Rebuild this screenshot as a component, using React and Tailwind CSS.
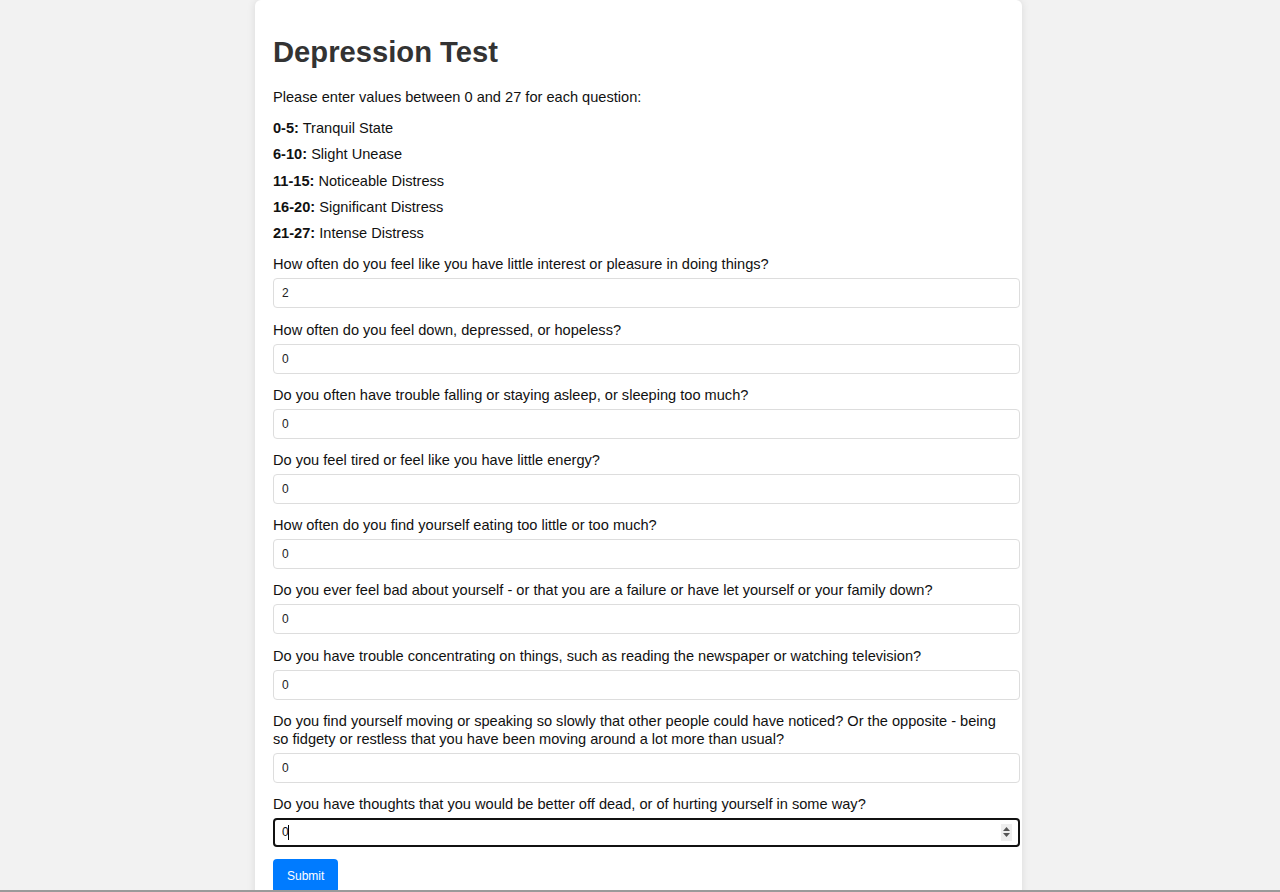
import React from 'react';

const legend = [
  ['0-5:', 'Tranquil State'],
  ['6-10:', 'Slight Unease'],
  ['11-15:', 'Noticeable Distress'],
  ['16-20:', 'Significant Distress'],
  ['21-27:', 'Intense Distress'],
];

const questions = [
  ['How often do you feel like you have little interest or pleasure in doing things?', '2'],
  ['How often do you feel down, depressed, or hopeless?', '0'],
  ['Do you often have trouble falling or staying asleep, or sleeping too much?', '0'],
  ['Do you feel tired or feel like you have little energy?', '0'],
  ['How often do you find yourself eating too little or too much?', '0'],
  ['Do you ever feel bad about yourself - or that you are a failure or have let yourself or your family down?', '0'],
  ['Do you have trouble concentrating on things, such as reading the newspaper or watching television?', '0'],
  ['Do you find yourself moving or speaking so slowly that other people could have noticed? Or the opposite - being so fidgety or restless that you have been moving around a lot more than usual?', '0'],
  ['Do you have thoughts that you would be better off dead, or of hurting yourself in some way?', '0'],
];

function Question({ text, value, focused }) {
  return (
    <div className="mb-[12.2px]">
      <label className="block text-[14.6px] leading-[18px] text-[#111] mb-[5px] pr-[20px]">{text}</label>
      {focused ? (
        <div className="relative w-[747px] h-[29px]">
          <input
            type="text"
            defaultValue={value}
            className="w-full h-full border-2 border-[#111] rounded-[4px] pl-[7px] text-[12px] text-[#111] bg-white outline-none"
          />
          {/* caret */}
          <span className="absolute left-[15px] top-[7px] w-[1px] h-[15px] bg-black" />
          {/* spinner */}
          <span className="absolute right-[8px] top-[6px] w-[11px] h-[17px] bg-[#eee] flex flex-col items-center justify-center gap-[2px]">
            <svg width="7" height="4" viewBox="0 0 7 4"><path d="M0 4 L3.5 0 L7 4 Z" fill="#555" /></svg>
            <svg width="7" height="4" viewBox="0 0 7 4"><path d="M0 0 L3.5 4 L7 0 Z" fill="#555" /></svg>
          </span>
        </div>
      ) : (
        <input
          type="text"
          defaultValue={value}
          className="block w-[747px] h-[30px] border border-[#ddd] rounded-[4px] pl-[8px] text-[12px] text-[#222] bg-white outline-none"
        />
      )}
    </div>
  );
}

export default function App() {
  return (
    <div className="min-h-screen bg-[#f2f2f2] font-['Liberation_Sans',Arial,sans-serif]">
      <div className="ml-[255px] w-[767px] bg-white rounded-[6px] shadow-[0_0_8px_rgba(0,0,0,0.1)] pl-[18px] pt-[35px] pb-[20px]">
        <h1 className="text-[29.2px] leading-[34px] font-bold text-[#333]">Depression Test</h1>
        <p className="mt-[19px] text-[14.6px] leading-[18px] text-[#111]">
          Please enter values between 0 and 27 for each question:
        </p>
        <div className="mt-[13px] flex flex-col gap-[8.3px]">
          {legend.map(([range, name]) => (
            <p key={range} className="text-[14.6px] leading-[18px] text-[#111]">
              <strong>{range}</strong> {name}
            </p>
          ))}
        </div>
        <form className="mt-[13.3px]" onSubmit={(e) => e.preventDefault()}>
          {questions.map(([q, v], i) => (
            <Question key={i} text={q} value={v} focused={i === questions.length - 1} />
          ))}
          <button
            type="submit"
            className="bg-[#007bff] text-white text-[12px] leading-[14px] px-[14px] py-[10px] rounded-[4px]"
          >
            Submit
          </button>
        </form>
      </div>
      <div className="fixed left-0 right-0 bottom-0 h-[2px] bg-[#9a9a9a]" />
    </div>
  );
}
